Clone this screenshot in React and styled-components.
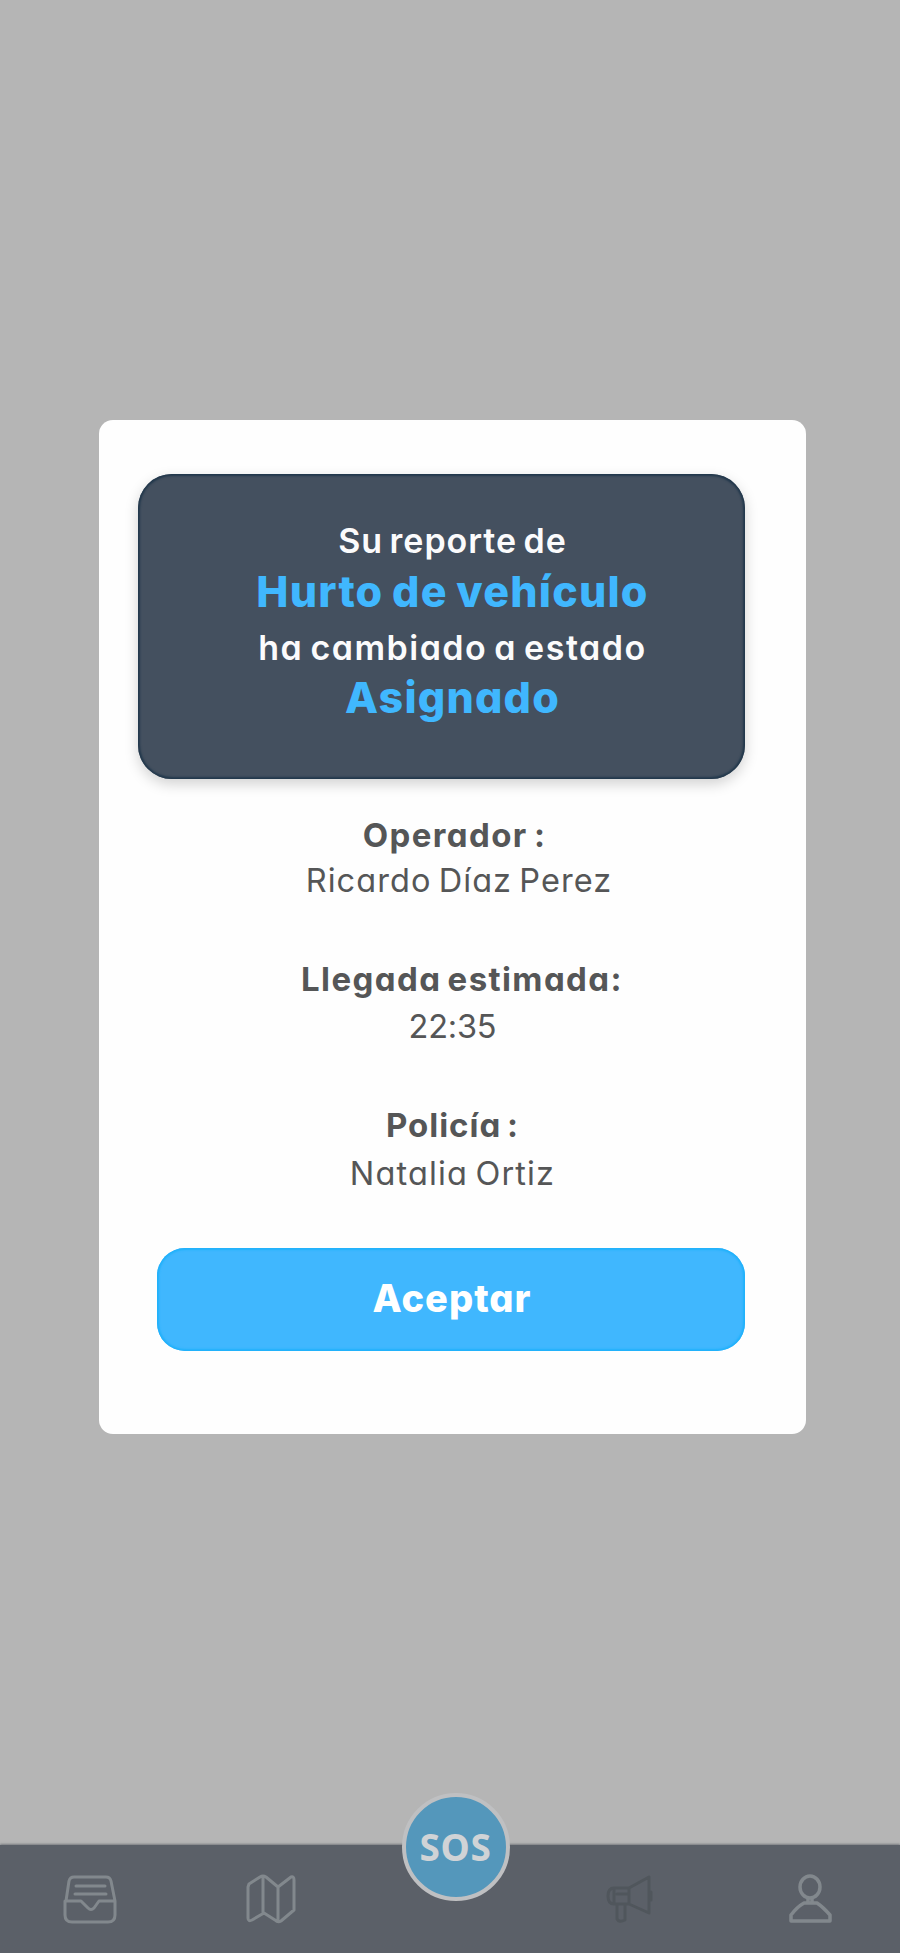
import React from "react";
import styled, { createGlobalStyle } from "styled-components";

const GlobalStyle = createGlobalStyle`
  * { box-sizing: border-box; }
  body {
    margin: 0;
    background: #b5b5b5;
    font-family: Inter, "Open Sans", sans-serif;
    font-feature-settings: "cv11", "ss03";
  }
`;

const Screen = styled.div`
  display: flex;
  flex-direction: column;
  width: 900px;
  height: 1953px;
  overflow: hidden;
  background: #b5b5b5;
`;

const Main = styled.main`
  flex: 1;
  padding: 420px 94px 0 99px;
`;

const Dialog = styled.section`
  display: flex;
  flex-direction: column;
  height: 1014px;
  padding: 54px 61px 0 39px;
  border-radius: 14px;
  background: #fefefe;
`;

const StatusCard = styled.div`
  height: 305px;
  padding: 42px 0 0 22px;
  border-radius: 34px;
  background: #44505f;
  box-shadow: inset 0 0 2px 2px #22384c, 0 5px 14px rgba(0, 0, 0, 0.18);
`;

const Line = styled.p`
  margin: 0;
  text-align: center;
  white-space: nowrap;
`;

const StatusText = styled(Line)`
  color: #fbfbfc;
  font-size: 34px;
  font-weight: 600;
  line-height: 50px;
  letter-spacing: ${(p) => p.$spacing}px;
  word-spacing: -3px;
`;

const StatusValue = styled(Line)`
  margin-bottom: ${(p) => p.$after || 0}px;
  color: #40b7fe;
  font-size: 43px;
  font-weight: 800;
  line-height: ${(p) => p.$line}px;
  letter-spacing: 1.2px;
  word-spacing: -2px;
`;

const Details = styled.dl`
  margin: 33px 0 0;
  height: 436px;
`;

const Detail = styled.div`
  margin-bottom: ${(p) => p.$after}px;
  padding-left: 22px;
  color: #555657;
  text-align: center;
  white-space: nowrap;
  word-spacing: -3px;
`;

const DetailLabel = styled.dt`
  padding-left: ${(p) => p.$shift}px;
  font-size: 33px;
  font-weight: 700;
  line-height: 46px;
  letter-spacing: ${(p) => p.$spacing}px;
`;

const DetailValue = styled.dd`
  margin: 0;
  padding-left: ${(p) => p.$shift}px;
  font-size: 32.5px;
  font-weight: 400;
  line-height: ${(p) => p.$line}px;
  letter-spacing: ${(p) => p.$spacing}px;
`;

const AcceptButton = styled.button`
  height: 103px;
  margin-left: 19px;
  padding: 0 0 4px 2px;
  border: 0;
  border-radius: 28px;
  background: #40b7fe;
  box-shadow: inset 0 0 2px 2px #20b1fb;
  color: #fff;
  font: 800 38px Inter, "Open Sans", sans-serif;
  font-feature-settings: "cv11";
  letter-spacing: 1px;
`;

const NavBar = styled.nav`
  display: grid;
  grid-template-columns: 182px 178px 182px 178px 180px;
  justify-items: center;
  height: 108px;
  padding-top: 26px;
  background: #5b6068;
  box-shadow: 0 -1px 2px #777a7e;
`;

const NavIcon = styled.svg`
  width: 60px;
  height: 56px;
  fill: none;
  stroke: ${(p) => p.$tone};
  stroke-width: ${(p) => p.$weight || 3};
  stroke-linecap: round;
  stroke-linejoin: round;
`;

const SosButton = styled.button`
  width: 108px;
  height: 108px;
  margin-top: -78px;
  margin-left: 9px;
  padding: 0 0 2px;
  border: 4px solid #bfc0c2;
  border-radius: 50%;
  background: #5497bb;
  color: #d0d3d6;
  font: 700 37px "Noto Sans", "Open Sans", sans-serif;
  letter-spacing: 0.7px;
`;

const DETAILS = [
  { label: "Operador :", value: "Ricardo Díaz Perez", line: 46, after: 52, ls: 1.4, vs: 1.07, lx: 4, vx: 13 },
  { label: "Llegada estimada:", value: "22:35", line: 50, after: 50, ls: 1.4, vs: -0.2, lx: 19, vx: 0 },
  { label: "Policía :", value: "Natalia Ortiz", line: 52, after: 0, ls: 1, vs: 1.15, lx: 0, vx: 0 },
];

export default function App() {
  return (
    <Screen>
      <GlobalStyle />
      <Main>
        <Dialog role="dialog">
          <StatusCard>
            <StatusText $spacing={0.96}>Su reporte de</StatusText>
            <StatusValue $line={50} $after={7}>Hurto de vehículo</StatusValue>
            <StatusText $spacing={1.5}>ha cambiado a estado</StatusText>
            <StatusValue $line={48}>Asignado</StatusValue>
          </StatusCard>
          <Details>
            {DETAILS.map((d) => (
              <Detail key={d.label} $after={d.after}>
                <DetailLabel $spacing={d.ls} $shift={d.lx}>{d.label}</DetailLabel>
                <DetailValue $spacing={d.vs} $shift={d.vx} $line={d.line}>{d.value}</DetailValue>
              </Detail>
            ))}
          </Details>
          <AcceptButton>Aceptar</AcceptButton>
        </Dialog>
      </Main>
      <NavBar>
        <NavIcon viewBox="0 0 60 56" $tone="#82888d">
          <path d="M5 30 8 10Q9 6 13 6H45Q49 6 50 10L54 30V44Q54 51 47 51H11Q4 51 4 44V30H20L27 37Q30 40 33 37L38 30H54" />
          <path d="M15 15H44M14 23H45" />
        </NavIcon>
        <NavIcon viewBox="0 0 60 56" $tone="#82888d">
          <path d="M8 13 19 6Q22 4 25 6L37 16 50 6Q53 5 53 9V39L40 50Q37 52 34 49L23 42 11 49Q7 51 7 47V16ZM22 6V42M37 16V50" />
        </NavIcon>
        <SosButton>SOS</SosButton>
        <NavIcon viewBox="0 0 60 56" $tone="#50565c">
          <path d="M13 17H28L48 6V42L28 33H13Q7 33 7 25Q7 17 13 17ZM28 17V33M13 17V33M16 34V48Q18 52 24 49V34M50 21V29M16 23H27" />
        </NavIcon>
        <NavIcon viewBox="0 0 60 56" $tone="#82888d" $weight={3.5}>
          <ellipse cx="30" cy="16" rx="10" ry="11" />
          <path d="M24 32H37Q43 36 50 44V50H11V44Q17 36 24 32ZM28 28V32M32 28V32" />
        </NavIcon>
      </NavBar>
    </Screen>
  );
}
